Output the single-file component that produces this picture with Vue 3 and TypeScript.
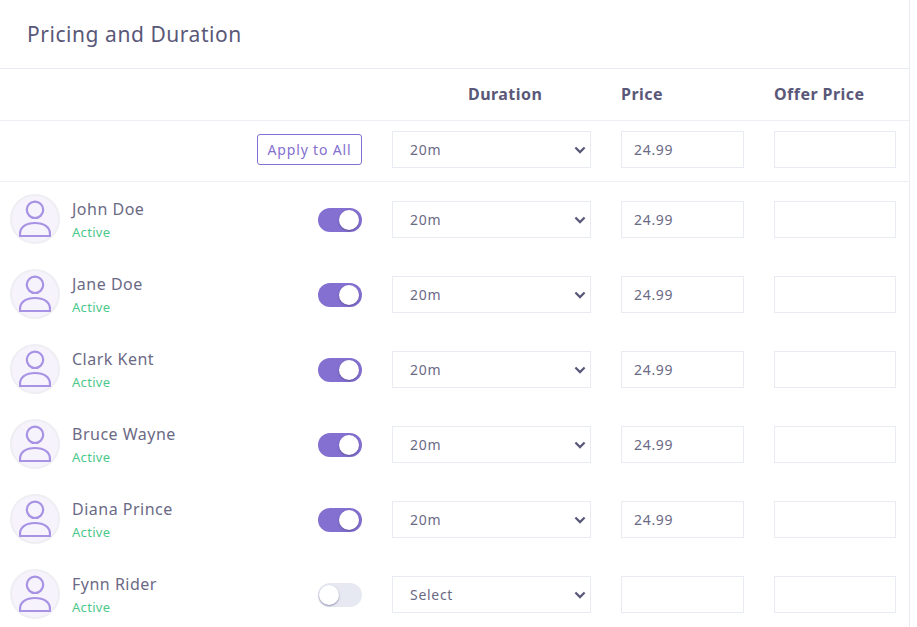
<script setup lang="ts">
interface Member {
  name: string
  on: boolean
  duration: string
  price: string
}

const members: Member[] = [
  { name: 'John Doe', on: true, duration: '20m', price: '24.99' },
  { name: 'Jane Doe', on: true, duration: '20m', price: '24.99' },
  { name: 'Clark Kent', on: true, duration: '20m', price: '24.99' },
  { name: 'Bruce Wayne', on: true, duration: '20m', price: '24.99' },
  { name: 'Diana Prince', on: true, duration: '20m', price: '24.99' },
  { name: 'Fynn Rider', on: false, duration: 'Select', price: '' }
]
</script>

<template>
  <div class="page">
    <h1 class="title">Pricing and Duration</h1>
    <div class="row head">
      <div></div>
      <div class="col-title duration">Duration</div>
      <div class="col-title">Price</div>
      <div class="col-title">Offer Price</div>
    </div>
    <div class="row apply">
      <div class="left end">
        <button class="apply-btn" type="button">Apply to All</button>
      </div>
      <div class="field select">20m<svg class="chev" width="12" height="8" viewBox="0 0 12 8"><path d="M1.4 1.5 6 6.1l4.6-4.6" fill="none" stroke="#5a5878" stroke-width="2.2"/></svg></div>
      <div class="field">24.99</div>
      <div class="field"></div>
    </div>
    <div v-for="m in members" :key="m.name" class="row member">
      <div class="left shifted">
        <div class="avatar">
          <svg width="32" height="38" viewBox="0 0 32 38" fill="none" stroke="#a792e4" stroke-width="2.2">
            <circle cx="16" cy="9.8" r="8.2" />
            <path d="M1 36v-2c0-7 6-11 15-11s15 4 15 11v2z" stroke-linejoin="round" />
          </svg>
        </div>
        <div class="who">
          <div class="name">{{ m.name }}</div>
          <div class="status">Active</div>
        </div>
        <div class="toggle" :class="{ on: m.on }"><span class="knob"></span></div>
      </div>
      <div class="field select">{{ m.duration }}<svg class="chev" width="12" height="8" viewBox="0 0 12 8"><path d="M1.4 1.5 6 6.1l4.6-4.6" fill="none" stroke="#5a5878" stroke-width="2.2"/></svg></div>
      <div class="field">{{ m.price }}</div>
      <div class="field"></div>
    </div>
  </div>
</template>

<style>
html, body { background: #fff; overflow: hidden; }
</style>

<style scoped>
.page {
  width: 910px;
  height: 627px;
  box-sizing: border-box;
  border-right: 1px solid #e9ebf3;
  font-family: "Noto Sans", sans-serif;
  color: #5a5878;
  overflow: hidden;
}
.title {
  margin: 0;
  height: 69px;
  box-sizing: border-box;
  padding: 20px 27px 0;
  font-size: 21px;
  line-height: 28px;
  font-weight: 400;
  letter-spacing: 0.55px;
  border-bottom: 1px solid #e9ebf3;
}
.row {
  display: grid;
  grid-template-columns: 1fr 199px 123px 122px;
  column-gap: 30px;
  padding-right: 13px;
  align-items: center;
}
.head {
  height: 52px;
  padding-bottom: 2px;
  border-bottom: 1px solid #eeeff4;
  box-sizing: border-box;
}
.col-title {
  font-size: 16px;
  font-weight: 700;
  letter-spacing: 0.45px;
}
.duration { padding-left: 76px; }
.apply {
  height: 61px;
  padding-bottom: 3px;
  box-sizing: border-box;
  border-bottom: 1px solid #eeeff4;
}
.member { height: 75px; }
.left {
  display: flex;
  align-items: center;
  padding-left: 10px;
}
.shifted { padding-bottom: 1px; }
.end { justify-content: flex-end; }
.apply-btn {
  width: 105px;
  height: 31px;
  padding: 0;
  background: #fff;
  border: 1px solid #8470d0;
  border-radius: 3px;
  color: #8470d0;
  font: 400 14px "Noto Sans", sans-serif;
  letter-spacing: 0.85px;
}
.field {
  height: 37px;
  box-sizing: border-box;
  border: 1px solid #e9ebf3;
  padding-left: 12px;
  display: flex;
  align-items: center;
  font-size: 14px;
  letter-spacing: 0.7px;
  background: #fff;
  color: #6b6a85;
}
.select {
  padding-left: 17px;
  justify-content: space-between;
  padding-right: 4px;
}
.chev { flex: none; }
.avatar {
  width: 50px;
  height: 50px;
  box-sizing: border-box;
  border: 2px solid #eeeef3;
  border-radius: 50%;
  background: #f6f3fd;
  display: flex;
  align-items: center;
  justify-content: center;
  flex: none;
}
.who { margin-left: 12px; flex: 1; }
.name {
  font-size: 16px;
  line-height: 22px;
  letter-spacing: 0.5px;
  color: #6b6a85;
}
.status {
  margin-top: 3px;
  font-size: 13px;
  line-height: 18px;
  letter-spacing: 0.3px;
  color: #4cc98a;
}
.toggle {
  width: 44px;
  height: 24px;
  margin-top: 1px;
  margin-right: 0.5px;
  border-radius: 12px;
  background: #e6e9f2;
  position: relative;
  flex: none;
}
.toggle.on { background: #8470d0; }
.knob {
  position: absolute;
  top: 2px;
  left: 1px;
  width: 20px;
  height: 20px;
  border-radius: 50%;
  background: #fff;
  box-shadow: 0 1px 2px rgba(60, 50, 110, 0.5);
}
.toggle.on .knob { left: 21.5px; }
</style>
